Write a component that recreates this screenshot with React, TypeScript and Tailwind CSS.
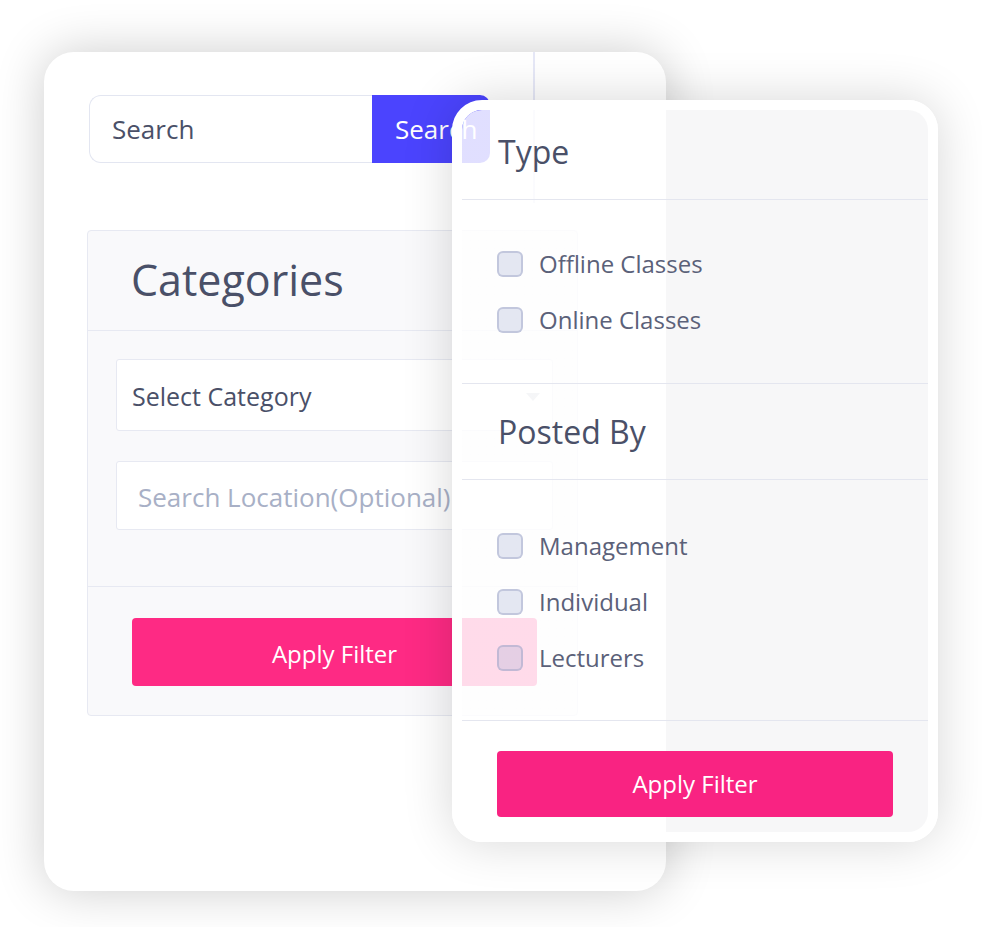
import React from 'react';

const typeOptions = ['Offline Classes', 'Online Classes'];
const postedByOptions = ['Management', 'Individual', 'Lecturers'];

function CheckRow({ label }: { label: string }) {
  return (
    <div className="flex h-[26px] items-center gap-[16px]">
      <span className="h-[26px] w-[26px] rounded-[6px] border-2 border-[rgba(150,160,195,0.45)] bg-[rgba(170,180,215,0.3)]" />
      <span className="text-[24px] leading-none text-[#5b6179]">{label}</span>
    </div>
  );
}

function FilterCard() {
  return (
    <div className="absolute left-[452px] top-[100px] h-[742px] w-[486px] rounded-[30px] border-[10px] border-white shadow-[0_0_50px_rgba(0,0,0,0.16)]">
      <div className="flex h-full flex-col rounded-[20px] bg-[linear-gradient(to_right,rgba(255,255,255,0.83)_204px,#f7f7f8_204px)]">
        <div className="flex h-[90px] items-center border-b border-[#e4e6ef] pb-[6px] pl-[36px] text-[32px] text-[#4a5068]">
          Type
        </div>
        <div className="flex flex-col gap-[30px] border-b border-[#e4e6ef] pb-[50px] pl-[35px] pt-[51px]">
          {typeOptions.map((o) => (
            <CheckRow key={o} label={o} />
          ))}
        </div>
        <div className="flex h-[96px] items-center border-b border-[#e4e6ef] pl-[36px] text-[32px] text-[#4a5068]">
          Posted By
        </div>
        <div className="flex flex-col gap-[30px] border-b border-[#e4e6ef] pb-[49px] pl-[35px] pt-[53px]">
          {postedByOptions.map((o) => (
            <CheckRow key={o} label={o} />
          ))}
        </div>
        <div className="pl-[35px] pt-[30px]">
          <button className="flex h-[66px] w-[396px] items-center justify-center rounded-[4px] bg-[#f92382] text-[24px] text-white">
            Apply Filter
          </button>
        </div>
      </div>
    </div>
  );
}

function CategoryCard() {
  return (
    <div className="relative h-[839px] w-[622px] rounded-[30px] bg-white pl-[45px] pt-[43px] shadow-[0_0_50px_rgba(0,0,0,0.2)]">
      <div className="absolute left-[489px] top-0 h-[151px] w-[2px] bg-[#e6e8f7]" />

      <div className="flex h-[68px] w-[401px]">
        <div className="flex flex-1 items-center rounded-l-[12px] border border-r-0 border-[#e3e6f1] pl-[22px] text-[26px] text-[#4a5068]">
          Search
        </div>
        <button className="flex w-[118px] items-center rounded-r-[10px] bg-[#4b44fe] pl-[23px] text-[26px] text-white">
          Search
        </button>
      </div>

      <div className="-ml-[2px] mt-[67px] flex h-[486px] w-[491px] flex-col rounded-[4px] border border-[#e7e9f2] bg-[#f9f9fb]">
        <div className="flex h-[100px] items-center border-b border-[#e7e9f2] pl-[43px] text-[43px] text-[#4a5068]">
          Categories
        </div>
        <div className="flex flex-col gap-[30px] border-b border-[#e7e9f2] px-[28px] pb-[56px] pt-[28px]">
          <div className="flex h-[72px] w-[437px] items-center justify-between rounded-[3px] border border-[#e7e9f2] bg-white pl-[15px] pr-[12px] pt-[4px] text-[25px] text-[#4a5068]">
            <span>Select Category</span>
            <svg width="14" height="8" viewBox="0 0 14 8">
              <path d="M0 0h14L7 8z" fill="#c5c8d3" />
            </svg>
          </div>
          <div className="flex h-[69px] w-[437px] items-center rounded-[3px] border border-[#e7e9f2] bg-white pl-[21px] pt-[3px] text-[26px] text-[#a8b0c6]">
            Search Location(Optional)
          </div>
        </div>
        <div className="pl-[44px] pt-[31px]">
          <button className="flex h-[68px] w-[405px] items-center justify-center rounded-[4px] bg-[#fe2a84] pt-[3px] text-[24px] text-white">
            Apply Filter
          </button>
        </div>
      </div>
    </div>
  );
}

export default function App() {
  return (
    <div className="relative h-[927px] w-[982px] overflow-hidden bg-white pl-[44px] pt-[52px] font-['Open_Sans',sans-serif]">
      <CategoryCard />
      <FilterCard />
    </div>
  );
}
